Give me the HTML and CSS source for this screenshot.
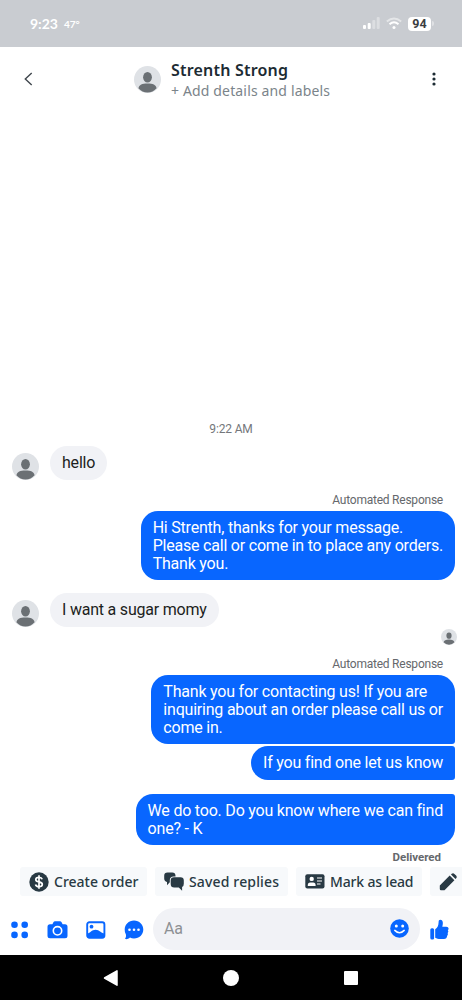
FILE: index.html
```html
<!DOCTYPE html>
<html lang="en">
<head>
<meta charset="utf-8">
<title>Strenth Strong</title>
<link rel="stylesheet" href="styles.css">
</head>
<body>
<svg class="defs" width="0" height="0">
  <symbol id="person" viewBox="0 0 27 27">
    <circle cx="13.5" cy="13.5" r="13.5" fill="#dfe2e6"/>
    <ellipse cx="13.5" cy="11.3" rx="4.400" ry="5.200" fill="#6b7074"/>
    <path d="M4.400 22.300C5.200 19 8 17.600 13.500 17.600s8.300 1.400 9.100 4.700Q19 26.500 13.500 26.500T4.400 22.300Z" fill="#6b7074"/>
  </symbol>
</svg>
<div class="phone">
  <div class="status">
    <span class="clock">9:23</span><span class="temp">47°</span>
    <svg class="signal" width="17" height="13" viewBox="0 0 17 13" fill="#fff">
      <rect x="0" y="8" width="3" height="4" rx="1"/><rect x="4.700" y="6" width="3" height="6" rx="1"/>
      <rect x="9.300" y="3" width="3" height="9" rx="1" opacity=".35"/><rect x="13.700" y="0" width="3" height="12" rx="1" opacity=".35"/>
    </svg>
    <svg class="wifi" width="16" height="13" viewBox="0 0 16 13" fill="none" stroke="#fff" stroke-width="1.900">
      <path d="M.8 4.500Q8-1.500 15.200 4.500" opacity=".5"/><path d="M3.500 7.300Q8 3.300 12.500 7.300"/><circle cx="8" cy="10.500" r="1.500" fill="#fff" stroke="none"/>
    </svg>
    <span class="battery">94</span><i class="battery-tip"></i>
  </div>
  <header class="header">
    <svg class="back" width="9" height="14" viewBox="0 0 9 14" fill="none" stroke="#40474d" stroke-width="1.400"><path d="M7.700 1 1.300 7l6.400 6"/></svg>
    <svg class="avatar"><use href="#person"/></svg>
    <div class="who"><div class="name">Strenth Strong</div><div class="details">+ Add details and labels</div></div>
    <svg class="more" width="4" height="14" viewBox="0 0 4 14" fill="#1c2b33"><circle cx="2" cy="2" r="1.600"/><circle cx="2" cy="7" r="1.600"/><circle cx="2" cy="12" r="1.600"/></svg>
  </header>
  <main class="thread">
    <div class="time">9:22 AM</div>
    <div class="row-in"><svg class="avatar"><use href="#person"/></svg><div class="bubble in">hello</div></div>
    <div class="label">Automated Response</div>
    <div class="bubble out">Hi Strenth, thanks for your message.<br>Please call or come in to place any orders.<br>Thank you.</div>
    <div class="row-in second"><svg class="avatar"><use href="#person"/></svg><div class="bubble in">I want a sugar momy</div></div>
    <svg class="seen"><use href="#person"/></svg>
    <div class="label again">Automated Response</div>
    <div class="bubble out contact">Thank you for contacting us! If you are<br>inquiring about an order please call us or<br>come in.</div>
    <div class="bubble out find">If you find one let us know</div>
    <div class="bubble out last">We do too. Do you know where we can find<br>one? - K</div>
    <div class="delivered">Delivered</div>
  </main>
  <div class="chips">
    <div class="chip create">
      <svg width="20" height="20" viewBox="0 0 20 20"><circle cx="10" cy="10" r="9.700" fill="#283943"/><path d="M13.200 7.300C12.800 6 11.600 5.400 10 5.400c-1.900 0-3.200.9-3.200 2.300 0 3.200 6.500 1.300 6.500 4.600 0 1.500-1.400 2.400-3.300 2.400-1.800 0-3.100-.8-3.500-2.200M10 3.300v13.400" fill="none" stroke="#fff" stroke-width="1.700"/></svg>
      <span>Create order</span>
    </div>
    <div class="chip saved">
      <svg width="20" height="19" viewBox="0 0 20 19" fill="#283943"><path d="M3.500.5h4.800q3 0 3.200 3.200v.8H9.500Q6 4.500 5.800 8v2.300L3 13.300V10Q.2 9.500.2 6.600V3.700Q.2.500 3.500.5Z"/><path d="M10 5.300h6.500q3.300 0 3.300 3.200v3.200q0 2.800-1.700 3.300v3.700L14.800 15.500H10.200Q6.700 15.500 6.700 12V8.500Q6.700 5.300 10 5.300Z"/></svg>
      <span>Saved replies</span>
    </div>
    <div class="chip lead">
      <svg width="20" height="15" viewBox="0 0 20 15"><rect x=".3" y=".3" width="19.200" height="14.200" rx="2" fill="#283943"/><circle cx="6.700" cy="4.900" r="2.200" fill="#fff"/><path d="M2.800 12v-1q0-2.600 2.400-2.600h3q2.400 0 2.400 2.600v1Z" fill="#fff"/><path d="M12 4h5M12 7h5M12 10h3.500" stroke="#fff" stroke-width="1.200"/></svg>
      <span>Mark as lead</span>
    </div>
    <div class="chip edit">
      <svg width="18" height="18" viewBox="0 0 18 18" fill="#283943"><path d="M.8 12.500 10.700 2.600l4.700 4.700L5.500 17.200H2Q.8 17.200.8 16ZM12 1.500l.7-.7q1.400-1.100 2.700.1l1.700 1.700q1.200 1.300.1 2.700l-.7.7Z"/></svg>
    </div>
  </div>
  <div class="composer">
    <svg class="dots" width="18" height="18" viewBox="0 0 18 18" fill="#0866ff"><circle cx="3.500" cy="3.700" r="3.300"/><circle cx="13.700" cy="3.700" r="3.300"/><circle cx="3.500" cy="13.900" r="3.300"/><circle cx="13.700" cy="13.900" r="3.300"/></svg>
    <svg class="camera" width="21" height="18" viewBox="0 0 21 18"><path d="M3 3.200h2.400l1-1.900Q7 .3 8 .3h5q1 0 1.600 1l1 1.900H18q2.500 0 2.500 2.500v9q0 2.500-2.500 2.500H3Q.5 17.200.5 14.700v-9Q.5 3.200 3 3.200Z" fill="#0866ff"/><circle cx="10.500" cy="9.800" r="4.200" fill="none" stroke="#fff" stroke-width="1.600"/></svg>
    <svg class="photo" width="20" height="18" viewBox="0 0 20 18"><rect x="1.200" y="1.200" width="17.200" height="15.500" rx="2.200" fill="#fff" stroke="#0866ff" stroke-width="1.900"/><circle cx="5.500" cy="5.700" r="1.900" fill="#0866ff"/><path d="M1.500 12.500C4 12 5.700 8.700 9.600 8.700c4 0 5.400 3.600 8.800 3.800v3q0 1.500-1.500 1.500H3Q1.500 17 1.500 15.500Z" fill="#0866ff"/></svg>
    <svg class="chat" width="20" height="20" viewBox="0 0 20 20"><path d="M10 .5c5.300 0 9.300 4 9.300 9s-4 9-9.300 9c-1.500 0-2.900-.3-4-.9-1.400 1.200-3 1.700-4.500 1.500-.4 0-.4-.5-.2-.8.700-1 .9-2.200.6-3.800A9 9 0 0 1 .7 9.500c0-5 4-9 9.300-9Z" fill="#0866ff"/><circle cx="5.500" cy="9.800" r="1.300" fill="#fff"/><circle cx="10" cy="9.800" r="1.300" fill="#fff"/><circle cx="14.500" cy="9.800" r="1.300" fill="#fff"/></svg>
    <div class="input"><span>Aa</span>
      <svg width="19" height="19" viewBox="0 0 19 19"><circle cx="9.500" cy="9.500" r="9.300" fill="#0866ff"/><circle cx="6.300" cy="7" r="1.500" fill="#fff"/><circle cx="12.700" cy="7" r="1.500" fill="#fff"/><path d="M4.800 11.400Q9.500 16 14.200 11.400" fill="none" stroke="#fff" stroke-width="1.500" stroke-linecap="round"/></svg>
    </div>
    <svg class="like" width="19" height="21" viewBox="0 0 19 21" fill="#0866ff"><rect x=".3" y="9.300" width="3.800" height="11.200" rx="1.500"/><path d="M5.200 10.200C7.500 8.900 8.500 6.600 8.600 3.300 8.600 1.500 9.200.8 10.300.8c2.600 0 3.200 3 2 7h4q2.200 0 2.300 1.700.1 1-.8 1.500 1.200 1.500-.1 3.100.7 1.700-.6 2.900Q16.800 20 14 20h-3.500c-2.300 0-3.800-.5-5.300-1.300Z"/></svg>
  </div>
  <nav class="nav">
    <svg width="16" height="18" viewBox="0 0 16 18"><path d="M14 1.800v14.400L1.500 9Z" fill="#fff" stroke="#fff" stroke-width="1.500" stroke-linejoin="round"/></svg>
    <i class="home"></i><i class="recent"></i>
  </nav>
</div>
</body>
</html>
```

FILE: styles.css
```css
* { box-sizing: border-box; }
body { margin: 0; background: #fff; font-family: Roboto, sans-serif; }
svg { display: block; flex: none; }
.defs { position: absolute; }
.phone { width: 462px; height: 1000px; display: flex; flex-direction: column; overflow: hidden; white-space: nowrap; }
.status { height: 47px; flex: none; background: #c9ccd1; display: flex; align-items: center; padding: 0 28px 0 30px; color: #fff; }
.clock { font: 700 14px/20px Lato, sans-serif; width: 34px; }
.temp { font: 700 10px/20px Lato, sans-serif; flex: 1; }
.signal { margin-right: 6px; }
.wifi { margin-right: 6px; }
.battery { width: 23px; height: 14px; border-radius: 4px; background: #fff; color: #3b3e42; font: 700 12.5px/14px Roboto, sans-serif; text-align: center; }
.battery-tip { width: 2px; height: 5px; margin-left: 1px; border-radius: 0 2px 2px 0; background: #dfe1e4; }
.header { height: 64px; flex: none; display: flex; align-items: center; padding: 0 26px 0 24px; }
.avatar { width: 27px; height: 27px; }
.header .avatar { margin-left: 101px; }
.who { margin-left: 10px; flex: 1; font-family: "Noto Sans", sans-serif; }
.name { font-size: 16px; line-height: 22px; font-weight: 600; letter-spacing: .2px; color: #1c2b33; padding-top: 1px; }
.details { font-size: 14px; line-height: 20px; letter-spacing: .15px; color: #7b848a; }
.thread { flex: 1; display: flex; flex-direction: column; align-items: flex-end; padding: 310px 7px 0 12px; }
.time { align-self: center; margin-right: 5px; font-size: 12px; line-height: 16px; letter-spacing: -.15px; color: #74777b; }
.row-in { align-self: flex-start; display: flex; align-items: flex-end; gap: 11px; margin-top: 9px; height: 34px; }
.second { margin-top: 13px; }
.bubble { font-size: 16px; line-height: 18px; letter-spacing: -.21px; border-radius: 17px; }
.in { height: 34px; padding: 8px 12px; background: #f1f2f6; color: #1c1e21; }
.out { padding: 8px 12px 7px; background: #0866ff; color: #fff; }
.label { margin: 12px 12px 3px 0; font-size: 12px; line-height: 16px; letter-spacing: -.23px; color: #65686c; }
.seen { width: 16px; height: 16px; margin: 2px -2px 0 0; }
.again { margin-top: 11px; }
.contact { border-bottom-right-radius: 3px; }
.find { margin-top: 2px; padding-bottom: 8px; border-radius: 17px 3px 3px 17px; }
.last { margin-top: 14px; border-top-right-radius: 3px; }
.delivered { margin: 4px 14px 0 0; font-size: 11.5px; line-height: 16px; font-weight: 700; color: #65686c; }
.chips { height: 29px; flex: none; display: flex; gap: 8px; padding-left: 20px; overflow: hidden; }
.chip { display: flex; flex: none; align-items: center; gap: 5px; height: 29px; padding-left: 9px; border-radius: 3px; background: #f7f9fb; color: #283943; font: 500 14px/20px "Noto Sans", sans-serif; }
.create { width: 127px; }
.saved { width: 133px; letter-spacing: .15px; }
.lead { width: 126px; letter-spacing: -.15px; }
.edit { width: 50px; }
.composer { height: 59px; flex: none; display: flex; align-items: center; padding: 11px 0 3px 11px; }
.camera { margin-left: 18px; }
.photo { margin-left: 18px; }
.chat { margin-left: 18px; }
.input { width: 267px; height: 42px; margin: -2px 0 0 9px; border-radius: 21px; background: #f1f2f6; display: flex; align-items: center; justify-content: space-between; padding: 0 11px; color: #8d9094; font-size: 16px; letter-spacing: -.3px; }
.like { margin-left: 10px; }
.nav { height: 45px; flex: none; background: #000; display: flex; align-items: center; padding-left: 103px; }
.home { width: 16px; height: 16px; border-radius: 50%; background: #fff; margin-left: 104px; }
.recent { width: 14px; height: 14px; border-radius: 1px; background: #fff; margin-left: 105px; }
```
